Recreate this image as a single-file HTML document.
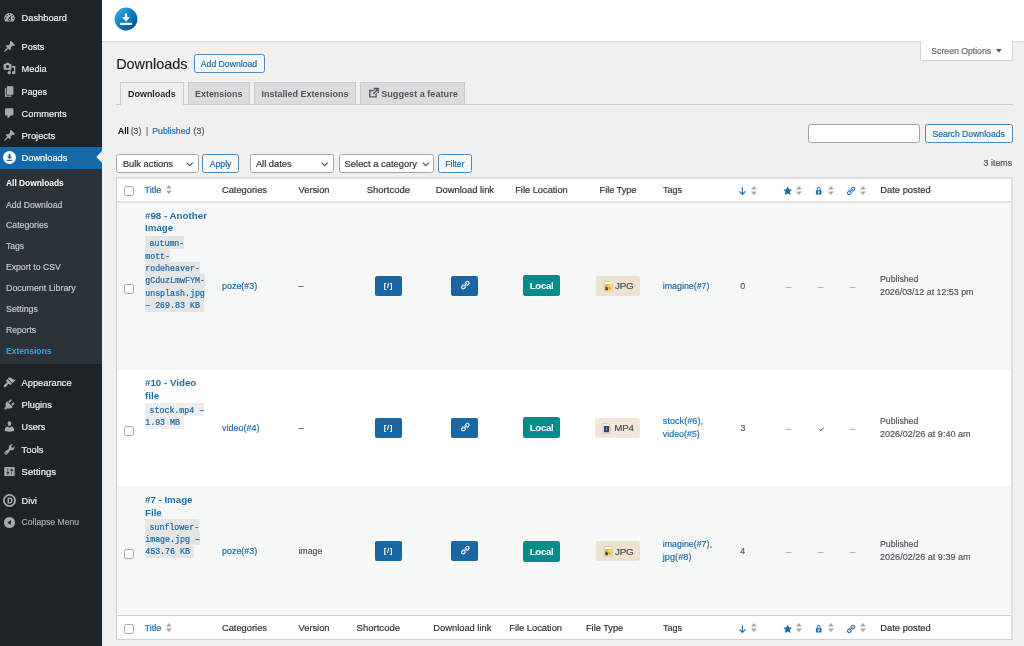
<!DOCTYPE html>
<html lang="en">
<head>
<meta charset="utf-8">
<title>Downloads ‹ WordPress</title>
<style>
html,body{margin:0;padding:0;}
body{width:1024px;height:646px;overflow:hidden;position:relative;background:#f0f0f1;font-family:"Liberation Sans",sans-serif;color:#3c434a;}
span,div,svg{position:absolute;box-sizing:border-box;}
span{white-space:pre;line-height:20px;-webkit-text-stroke:0.18px currentColor;}
svg{overflow:visible;}
.sb{background:#1d2327;}
.sub{background:#2c3338;}
.act{background:#1669a8;}
.hdr{background:#fff;border-bottom:1px solid #dcdcde;}
.btn{background:#f6f7f7;border:1px solid #4d8abd;border-radius:2.5px;}
.sel{background:#fff;border:1px solid #a3a6aa;border-radius:2.5px;}
.tab{background:#dcdcde;border:1px solid #cbccce;border-bottom:none;}
.tab.on{background:#f0f0f1;}
.tbl{background:#fff;border:1px solid #cfd0d3;}
.alt{background:#f6f7f7;}
.cb{background:#fff;border:1px solid #a3a6aa;border-radius:2.5px;}
.bb{background:#1a66a3;border-radius:2px;}
.loc{background:#028d8b;border-radius:2.5px;}
.ft{background:#eee2d1;border-radius:2.5px;}
.cd{background:rgba(0,0,0,.07);}
.m{font-family:"Liberation Mono",monospace;-webkit-text-stroke:0.22px currentColor;}
</style>
</head>
<body>
<div id="wrap" style="left:0;top:0;width:1024px;height:646px;will-change:transform">
<div class="sb" style="left:0;top:0;width:102px;height:646px"></div>
<div class="sub" style="left:0;top:169px;width:102px;height:195.4px"></div>
<div class="act" style="left:0;top:147px;width:102px;height:22px"></div>
<svg width="6" height="12" style="left:96px;top:151.4px"><path d="M6 0L0.300 5.900L6 11.800z" fill="#f0f0f1"/></svg>
<span style="left:21.60px;top:8.00px;font-size:9.28px;color:#f0f0f1;">Dashboard</span>
<svg viewBox="0 0 20 20" width="13" height="13" style="left:3.20px;top:11.20px"><path fill="#a7aaad" fill-rule="evenodd" d="M3.76 16h12.48c1.1-1.37 1.76-3.11 1.76-5 0-4.42-3.58-8-8-8s-8 3.58-8 8c0 1.89.66 3.63 1.76 5zM10 4c.55 0 1 .45 1 1s-.45 1-1 1-1-.45-1-1 .45-1 1-1zM6 6c.55 0 1 .45 1 1s-.45 1-1 1-1-.45-1-1 .45-1 1-1zm8 0c.55 0 1 .45 1 1s-.45 1-1 1-1-.45-1-1 .45-1 1-1zm-5.37 5.55L12 7v6c0 1.1-.9 2-2 2s-2-.9-2-2c0-.57.24-1.08.63-1.45zM4 10c.55 0 1 .45 1 1s-.45 1-1 1-1-.45-1-1 .45-1 1-1zm12 0c.55 0 1 .45 1 1s-.45 1-1 1-1-.45-1-1 .45-1 1-1zm-5 3c0-.55-.45-1-1-1s-1 .45-1 1 .45 1 1 1 1-.45 1-1z"/></svg>
<span style="left:21.60px;top:37.00px;font-size:9.08px;color:#f0f0f1;">Posts</span>
<svg viewBox="0 0 20 20" width="13" height="13" style="left:3.20px;top:39.70px"><path fill="#a7aaad" fill-rule="evenodd" d="M10.44 3.02l1.82-1.82 6.36 6.35-1.83 1.82c-1.05-.68-2.48-.57-3.41.36l-.75.75c-.92.93-1.04 2.35-.35 3.41l-1.83 1.82-2.41-2.41-2.8 2.79c-.42.42-3.38 2.71-3.8 2.29s1.86-3.39 2.28-3.81l2.79-2.79L4.1 9.36l1.83-1.82c1.05.69 2.48.57 3.4-.36l.75-.75c.93-.92 1.05-2.35.36-3.41z"/></svg>
<span style="left:21.60px;top:59.00px;font-size:9.22px;color:#f0f0f1;">Media</span>
<svg viewBox="0 0 20 20" width="13" height="13" style="left:3.20px;top:62.00px"><path fill="#a7aaad" fill-rule="evenodd" d="M13 11V4c0-.55-.45-1-1-1h-1.670L9 1H5L3.670 3H2c-.55 0-1 .45-1 1v7c0 .55.45 1 1 1h10c.55 0 1-.45 1-1zM7 4.5c1.38 0 2.5 1.12 2.5 2.5S8.380 9.500 7 9.500 4.500 8.380 4.500 7 5.620 4.500 7 4.500zM14 6h5v10.500c0 1.380-1.120 2.500-2.500 2.500S14 17.880 14 16.500s1.120-2.500 2.500-2.500c.17 0 .34.020.5.050V9h-3V6zm-4 8.050V13h2v3.500c0 1.380-1.120 2.500-2.500 2.500S7 17.880 7 16.500 8.120 14 9.500 14c.17 0 .34.020.5.050z"/></svg>
<span style="left:21.60px;top:82.00px;font-size:8.92px;color:#f0f0f1;">Pages</span>
<svg viewBox="0 0 20 20" width="13" height="13" style="left:3.20px;top:84.60px"><path fill="#a7aaad" fill-rule="evenodd" d="M6 15V2h10v13H6zm-1 1h8v2H3V5h2v11z"/></svg>
<span style="left:21.60px;top:104.00px;font-size:9.31px;color:#f0f0f1;">Comments</span>
<svg viewBox="0 0 20 20" width="13" height="13" style="left:3.20px;top:106.90px"><path fill="#a7aaad" fill-rule="evenodd" d="M5 2h9c1.1 0 2 .9 2 2v7c0 1.1-.9 2-2 2h-2l-5 5v-5H5c-1.1 0-2-.9-2-2V4c0-1.1.9-2 2-2z"/></svg>
<span style="left:21.60px;top:126.00px;font-size:9.33px;color:#f0f0f1;">Projects</span>
<svg viewBox="0 0 20 20" width="13" height="13" style="left:3.20px;top:128.80px"><path fill="#a7aaad" fill-rule="evenodd" d="M10.44 3.02l1.82-1.82 6.36 6.35-1.83 1.82c-1.05-.68-2.48-.57-3.41.36l-.75.75c-.92.93-1.04 2.35-.35 3.41l-1.83 1.82-2.41-2.41-2.8 2.79c-.42.42-3.38 2.71-3.8 2.29s1.86-3.39 2.28-3.81l2.79-2.79L4.1 9.36l1.83-1.82c1.05.69 2.48.57 3.4-.36l.75-.75c.93-.92 1.05-2.35.36-3.41z"/></svg>
<span style="left:21.60px;top:148.00px;font-size:9.24px;color:#fff;">Downloads</span>
<span style="left:21.60px;top:373.00px;font-size:9.29px;color:#f0f0f1;">Appearance</span>
<svg viewBox="0 0 20 20" width="13" height="13" style="left:3.20px;top:375.70px"><path fill="#a7aaad" fill-rule="evenodd" d="M14.48 11.06L7.41 3.99l1.5-1.5c.5-.56 2.3-.47 3.51.32 1.21.8 1.43 1.28 2.91 2.1 1.18.64 2.45 1.26 4.45.85zm-.71.71L6.7 4.7 4.93 6.47c-.39.39-.39 1.02 0 1.41l1.06 1.06c.39.39.39 1.030 0 1.420-.6.6-1.430 1.110-2.210 1.690-.35.26-.7.53-1.010.84C1.430 14.230.4 16.080 1.4 17.070c.99 1 2.840-.03 4.180-1.360.31-.31.58-.66.85-1.020.57-.78 1.080-1.610 1.690-2.210.39-.39 1.020-.39 1.410 0l1.060 1.060c.39.39 1.020.39 1.410 0z"/></svg>
<span style="left:21.60px;top:395.00px;font-size:9.21px;color:#f0f0f1;">Plugins</span>
<svg viewBox="0 0 20 20" width="13" height="13" style="left:3.20px;top:397.80px"><path fill="#a7aaad" fill-rule="evenodd" d="M13.11 4.36L9.87 7.6 8 5.73l3.240-3.240c.35-.34 1.050-.2 1.560.32.52.51.66 1.210.31 1.550zm-8 1.770l.91-1.120 9.010 9.010-1.190.84c-.71.71-2.630 1.160-3.820 1.160H6.140L4.9 17.260c-.59.59-1.540.59-2.120 0-.59-.58-.59-1.530 0-2.120l1.240-1.240v-3.880c0-1.130.4-3.190 1.090-3.890zm7.260 3.970l3.240-3.240c.34-.35 1.040-.21 1.550.31.52.51.66 1.210.31 1.550l-3.240 3.250z"/></svg>
<span style="left:21.60px;top:417.00px;font-size:9.11px;color:#f0f0f1;">Users</span>
<svg viewBox="0 0 20 20" width="13" height="13" style="left:3.20px;top:419.90px"><path fill="#a7aaad" fill-rule="evenodd" d="M10 9.25c-2.27 0-2.73-3.44-2.73-3.440C7 4.020 7.820 2 9.970 2c2.160 0 2.980 2.020 2.710 3.810 0 0-.41 3.440-2.680 3.440zm0 2.570L12.720 10c2.390 0 4.520 2.330 4.520 4.530v2.490s-3.650 1.130-7.240 1.130c-3.650 0-7.240-1.130-7.240-1.130v-2.490c0-2.250 1.940-4.480 4.470-4.480z"/></svg>
<span style="left:21.60px;top:440.00px;font-size:9.34px;color:#f0f0f1;">Tools</span>
<svg viewBox="0 0 20 20" width="13" height="13" style="left:3.20px;top:443.00px"><path fill="#a7aaad" fill-rule="evenodd" d="M16.68 9.77c-1.34 1.34-3.3 1.67-4.95.99l-5.41 6.520c-.99.99-2.590.99-3.580 0s-.99-2.590 0-3.570l6.520-5.420c-.68-1.650-.35-3.610.99-4.950 1.280-1.280 3.120-1.620 4.720-1.060l-2.890 2.890 2.820 2.820 2.860-2.870c.53 1.580.18 3.390-1.080 4.650zM3.810 16.210c.4.39 1.040.39 1.430 0 .4-.4.4-1.040 0-1.430-.39-.4-1.030-.4-1.430 0-.39.39-.39 1.030 0 1.430z"/></svg>
<span style="left:21.60px;top:462.00px;font-size:9.52px;color:#f0f0f1;">Settings</span>
<svg viewBox="0 0 20 20" width="13" height="13" style="left:3.20px;top:465.00px"><path fill="#a7aaad" fill-rule="evenodd" d="M18 16V4c0-.55-.45-1-1-1H3c-.55 0-1 .45-1 1v12c0 .55.45 1 1 1h14c.55 0 1-.45 1-1zM8 11h1c.55 0 1 .45 1 1s-.45 1-1 1H8v1.500c0 .28-.22.5-.5.5s-.5-.22-.5-.5V13H6c-.55 0-1-.45-1-1s.45-1 1-1h1V5.500c0-.28.22-.5.5-.5s.5.22.5.5V11zm5-2h-1c-.55 0-1-.45-1-1s.45-1 1-1h1V5.500c0-.28.22-.5.5-.5s.5.22.5.5V7h1c.55 0 1 .45 1 1s-.45 1-1 1h-1v5.500c0 .28-.22.5-.5.5s-.5-.22-.5-.5V9z"/></svg>
<span style="left:21.60px;top:491.00px;font-size:9.18px;color:#f0f0f1;">Divi</span>
<span style="left:21.60px;top:512.00px;font-size:8.65px;color:#a7aaad;">Collapse Menu</span>
<span style="left:6.00px;top:173.00px;font-size:8.39px;color:#fff;font-weight:700;-webkit-text-stroke:0;">All Downloads</span>
<span style="left:6.00px;top:195.00px;font-size:8.66px;color:#c3c7cb;">Add Download</span>
<span style="left:6.00px;top:215.00px;font-size:8.73px;color:#c3c7cb;">Categories</span>
<span style="left:6.00px;top:236.00px;font-size:8.57px;color:#c3c7cb;">Tags</span>
<span style="left:6.00px;top:257.00px;font-size:8.63px;color:#c3c7cb;">Export to CSV</span>
<span style="left:6.00px;top:278.00px;font-size:8.84px;color:#c3c7cb;">Document Library</span>
<span style="left:6.00px;top:299.00px;font-size:8.86px;color:#c3c7cb;">Settings</span>
<span style="left:6.00px;top:320.00px;font-size:8.62px;color:#c3c7cb;">Reports</span>
<span style="left:6.00px;top:341.00px;font-size:8.53px;color:#39a0dc;font-weight:700;-webkit-text-stroke:0;">Extensions</span>
<svg viewBox="0 0 20 20" width="13" height="13" style="left:3.300px;top:151px"><circle cx="10" cy="10" r="10" fill="#fff"/><path d="M8.6 4.6h2.8v4h2.6L10 12.6 6 8.600h2.6zM5.600 13.600h8.800v1.800H5.600z" fill="#1f6cab"/></svg>
<svg viewBox="0 0 20 20" width="13" height="13" style="left:3.300px;top:494.100px"><circle cx="10" cy="10" r="8.600" fill="none" stroke="#a7aaad" stroke-width="2.800"/><path d="M7 5.500h3.200a4.500 4.500 0 0 1 0 9H7zM9.200 7.500v5h1a2.500 2.500 0 0 0 0-5z" fill="#a7aaad" fill-rule="evenodd"/></svg>
<svg viewBox="0 0 20 20" width="11" height="11" style="left:4.300px;top:517.300px"><circle cx="10" cy="10" r="10" fill="#a7aaad"/><path d="M12.500 5.500v9L6 10z" fill="#1d2327"/></svg>
<div class="hdr" style="left:102px;top:0;width:922px;height:41.6px"></div>
<svg viewBox="0 0 24 24" width="24" height="24" style="left:114px;top:7.100px"><defs><linearGradient id="lg" x1="0.100" y1="0.100" x2="0.900" y2="0.900"><stop offset="0" stop-color="#44a8d2"/><stop offset="0.500" stop-color="#0b7dc5"/><stop offset="1" stop-color="#03508f"/></linearGradient></defs><circle cx="12" cy="12" r="11.400" fill="url(#lg)"/><path d="M10.900 6.400h2.200v3.700h2.900L12 14.700 8 10.100h2.900zM6.200 15.700h11.700v2.300H6.200z" fill="#fff"/></svg>
<div style="left:920px;top:41px;width:92.500px;height:19.600px;background:#fff;border:1px solid #d2d3d5;border-top:none;border-radius:0 0 2.500px 2.500px"></div>
<span style="left:931.30px;top:41.00px;font-size:8.68px;color:#646970;">Screen Options</span>
<svg width="6" height="4" style="left:995.8px;top:49px"><path d="M0 0h5.600L2.800 3.800z" fill="#50575e"/></svg>
<span style="left:116.20px;top:54.00px;font-size:14.41px;color:#1d2327;">Downloads</span>
<div class="btn" style="left:194.00px;top:53.70px;width:70.60px;height:19.50px;"></div>
<span style="left:200.80px;top:54.00px;font-size:8.67px;color:#1f6cab;">Add Download</span>
<div style="left:116.00px;top:104.00px;width:896.50px;height:1.00px;background:#cbccce"></div>
<div class="tab on" style="left:120.00px;top:81.60px;width:63.60px;height:23.40px;"></div>
<div class="tab" style="left:188.30px;top:81.60px;width:61.70px;height:22.40px;"></div>
<div class="tab" style="left:254.00px;top:81.60px;width:102.00px;height:22.40px;"></div>
<div class="tab" style="left:360.40px;top:81.60px;width:104.80px;height:22.40px;"></div>
<span style="left:128.00px;top:84.00px;font-size:8.96px;color:#1d2327;font-weight:700;-webkit-text-stroke:0;">Downloads</span>
<span style="left:195.10px;top:84.00px;font-size:8.87px;color:#50575e;font-weight:700;-webkit-text-stroke:0;">Extensions</span>
<span style="left:261.60px;top:84.00px;font-size:9.01px;color:#50575e;font-weight:700;-webkit-text-stroke:0;">Installed Extensions</span>
<span style="left:381.20px;top:84.00px;font-size:9.14px;color:#50575e;font-weight:700;-webkit-text-stroke:0;">Suggest a feature</span>
<svg viewBox="0 0 20 20" width="14" height="14" style="left:367.300px;top:85.900px"><path fill="#50575e" d="M9 3h8v8l-2-1V6.920l-5.600 5.590-1.410-1.410L13.580 5.500H10L9 3zm3 12V11.900l2-2V17H3V6h8l-2 2H5v7h7z" transform="translate(0,-0.500)"/></svg>
<span style="left:118.00px;top:121.00px;font-size:8.50px;color:#000;font-weight:700;-webkit-text-stroke:0;">All</span>
<span style="left:130.70px;top:121.00px;font-size:8.80px;color:#50575e;">(3)</span>
<span style="left:146.00px;top:121.00px;font-size:8.60px;color:#646970;">|</span>
<span style="left:152.30px;top:121.00px;font-size:8.67px;color:#1f6cab;">Published</span>
<span style="left:193.60px;top:121.00px;font-size:8.80px;color:#50575e;">(3)</span>
<div class="sel" style="left:808.10px;top:124.20px;width:111.50px;height:19.20px;"></div>
<div class="btn" style="left:925.10px;top:124.20px;width:87.50px;height:19.20px;"></div>
<span style="left:932.40px;top:124.00px;font-size:8.65px;color:#1f6cab;">Search Downloads</span>
<div class="sel" style="left:116.00px;top:153.50px;width:82.50px;height:19.50px;"></div>
<span style="left:122.90px;top:154.00px;font-size:9.31px;color:#2c3338;">Bulk actions</span>
<svg width="8" height="5" style="left:185.6px;top:161.9px"><path d="M0.700 0.700L3.700 3.700L6.700 0.700" fill="none" stroke="#50575e" stroke-width="1.200"/></svg>
<div class="btn" style="left:202.00px;top:153.70px;width:36.90px;height:19.30px;"></div>
<span style="left:209.70px;top:154.00px;font-size:8.71px;color:#1f6cab;">Apply</span>
<div class="sel" style="left:250.30px;top:153.70px;width:84.00px;height:19.30px;"></div>
<span style="left:255.90px;top:154.00px;font-size:9.33px;color:#2c3338;">All dates</span>
<svg width="8" height="5" style="left:321.2px;top:161.9px"><path d="M0.700 0.700L3.700 3.700L6.700 0.700" fill="none" stroke="#50575e" stroke-width="1.200"/></svg>
<div class="sel" style="left:339.00px;top:153.70px;width:95.00px;height:19.30px;"></div>
<span style="left:344.60px;top:154.00px;font-size:9.40px;color:#2c3338;">Select a category</span>
<svg width="8" height="5" style="left:422px;top:161.9px"><path d="M0.700 0.700L3.700 3.700L6.700 0.700" fill="none" stroke="#50575e" stroke-width="1.200"/></svg>
<div class="btn" style="left:438.00px;top:153.70px;width:33.80px;height:19.30px;"></div>
<span style="left:445.20px;top:154.00px;font-size:8.68px;color:#1f6cab;">Filter</span>
<span style="left:983.60px;top:153.00px;font-size:8.90px;color:#50575e;">3 items</span>
<div style="left:116.00px;top:177.00px;width:897.00px;height:463.00px;background:#fff"></div>
<div class="alt" style="left:117.00px;top:202.00px;width:894.00px;height:168.00px;"></div>
<div class="alt" style="left:117.00px;top:486.00px;width:894.00px;height:129.00px;"></div>
<div style="left:116.00px;top:177.00px;width:897.00px;height:2.00px;background:#e0e1e4"></div>
<div style="left:1011.00px;top:177.00px;width:2.00px;height:463.00px;background:#e0e1e4"></div>
<div style="left:116.00px;top:177.00px;width:1.00px;height:463.00px;background:#cfd0d3"></div>
<div style="left:116.00px;top:639.00px;width:897.00px;height:1.00px;background:#cfd0d3"></div>
<div style="left:117.00px;top:201.00px;width:894.00px;height:2.00px;background:#e2e3e5"></div>
<div style="left:117.00px;top:615.00px;width:894.00px;height:1.00px;background:#d0d1d4"></div>
<div class="cb" style="left:124.00px;top:185.60px;width:10.00px;height:10.00px;"></div>
<div class="cb" style="left:124.00px;top:283.70px;width:10.00px;height:10.00px;"></div>
<div class="cb" style="left:124.00px;top:425.80px;width:10.00px;height:10.00px;"></div>
<div class="cb" style="left:124.00px;top:549.00px;width:10.00px;height:10.00px;"></div>
<div class="cb" style="left:124.00px;top:623.50px;width:10.00px;height:10.00px;"></div>
<span style="left:144.40px;top:180.00px;font-size:9.23px;color:#1f6cab;">Title</span>
<svg width="6" height="10" style="left:166px;top:184.90px"><path d="M0 3.600L2.900 0L5.800 3.600z" fill="#a7aaad"/><path d="M0 5.600L2.900 9.200L5.800 5.600z" fill="#a7aaad"/></svg>
<span style="left:221.90px;top:180.00px;font-size:9.33px;color:#2c3338;">Categories</span>
<span style="left:298.60px;top:180.00px;font-size:9.26px;color:#2c3338;">Version</span>
<span style="left:366.70px;top:180.00px;font-size:9.50px;color:#2c3338;">Shortcode</span>
<span style="left:435.70px;top:180.00px;font-size:9.38px;color:#2c3338;">Download link</span>
<span style="left:515.20px;top:180.00px;font-size:9.28px;color:#2c3338;">File Location</span>
<span style="left:599.60px;top:180.00px;font-size:9.11px;color:#2c3338;">File Type</span>
<span style="left:663.00px;top:180.00px;font-size:8.99px;color:#2c3338;">Tags</span>
<svg width="8" height="9" style="left:738.6px;top:187.00px"><path d="M3.400 0.200v7.200M0.500 4.400L3.400 7.400L6.300 4.400" fill="none" stroke="#1f6cab" stroke-width="1.150"/></svg>
<svg width="6" height="10" style="left:750.6px;top:185.90px"><path d="M0 3.600L2.900 0L5.800 3.600z" fill="#a7aaad"/><path d="M0 5.600L2.900 9.200L5.800 5.600z" fill="#a7aaad"/></svg>
<svg viewBox="0 0 20 20" width="9.400" height="9.400" style="left:782.700px;top:186.40px"><path d="M10 1l3 6 6 .75-4.120 4.620L16 19l-6-3-6 3 1.130-6.630L1 7.750 7 7z" fill="#1f6cab"/></svg>
<svg width="6" height="10" style="left:796px;top:185.90px"><path d="M0 3.600L2.900 0L5.800 3.600z" fill="#a7aaad"/><path d="M0 5.600L2.900 9.200L5.800 5.600z" fill="#a7aaad"/></svg>
<svg viewBox="0 0 20 20" width="9.400" height="9.400" style="left:814.400px;top:186.30px"><path fill-rule="evenodd" d="M15 9h-1V6c0-2.200-1.800-4-4-4S6 3.800 6 6v3H5c-.55 0-1 .45-1 1v7c0 .55.45 1 1 1h10c.55 0 1-.45 1-1v-7c0-.55-.45-1-1-1zm-4 5.720V16H9v-1.280c-.6-.35-1-.98-1-1.720 0-1.100.9-2 2-2s2 .9 2 2c0 .74-.4 1.380-1 1.720zM12 9H8V6c0-1.100.9-2 2-2s2 .9 2 2v3z" fill="#1f6cab"/></svg>
<svg width="6" height="10" style="left:827.8px;top:185.90px"><path d="M0 3.600L2.900 0L5.800 3.600z" fill="#a7aaad"/><path d="M0 5.600L2.900 9.200L5.800 5.600z" fill="#a7aaad"/></svg>
<svg viewBox="0 0 20 20" width="9.800" height="9.800" style="left:846.100px;top:186.10px"><path d="M17.740 2.760c1.680 1.690 1.680 4.410 0 6.100l-1.530 1.520c-1.120 1.120-2.700 1.470-4.140 1.090l2.620-2.610.76-.77.760-.76c.84-.84.840-2.200 0-3.040-.84-.85-2.200-.85-3.040 0l-.77.760-3.380 3.380c-.37-1.440-.02-3.020 1.100-4.140l1.520-1.530c1.690-1.680 4.420-1.680 6.100 0zM8.590 13.430l5.340-5.340c.42-.42.42-1.100 0-1.520-.44-.43-1.130-.39-1.530 0l-5.330 5.340c-.42.420-.42 1.100 0 1.520.44.430 1.130.390 1.520 0zm-.76 2.290l4.140-4.150c.38 1.440.03 3.020-1.090 4.140l-1.520 1.530c-1.690 1.680-4.410 1.680-6.100 0-1.680-1.680-1.680-4.420 0-6.100l1.530-1.520c1.120-1.120 2.700-1.470 4.140-1.100l-4.140 4.150c-.85.840-.85 2.200 0 3.050.84.840 2.200.840 3.040 0z" fill="#1f6cab"/></svg>
<svg width="6" height="10" style="left:859.7px;top:185.90px"><path d="M0 3.600L2.900 0L5.800 3.600z" fill="#a7aaad"/><path d="M0 5.600L2.900 9.200L5.800 5.600z" fill="#a7aaad"/></svg>
<span style="left:880.30px;top:180.00px;font-size:9.35px;color:#2c3338;">Date posted</span>
<span style="left:144.40px;top:618.00px;font-size:9.23px;color:#1f6cab;">Title</span>
<svg width="6" height="10" style="left:166px;top:623.40px"><path d="M0 3.600L2.900 0L5.800 3.600z" fill="#a7aaad"/><path d="M0 5.600L2.900 9.200L5.800 5.600z" fill="#a7aaad"/></svg>
<span style="left:221.90px;top:618.00px;font-size:9.33px;color:#2c3338;">Categories</span>
<span style="left:298.60px;top:618.00px;font-size:9.26px;color:#2c3338;">Version</span>
<span style="left:356.60px;top:618.00px;font-size:9.54px;color:#2c3338;">Shortcode</span>
<span style="left:433.30px;top:618.00px;font-size:9.33px;color:#2c3338;">Download link</span>
<span style="left:509.30px;top:618.00px;font-size:9.31px;color:#2c3338;">File Location</span>
<span style="left:586.00px;top:618.00px;font-size:9.21px;color:#2c3338;">File Type</span>
<span style="left:663.00px;top:618.00px;font-size:8.99px;color:#2c3338;">Tags</span>
<svg width="8" height="9" style="left:738.6px;top:624.50px"><path d="M3.400 0.200v7.200M0.500 4.400L3.400 7.400L6.300 4.400" fill="none" stroke="#1f6cab" stroke-width="1.150"/></svg>
<svg width="6" height="10" style="left:750.6px;top:623.40px"><path d="M0 3.600L2.900 0L5.800 3.600z" fill="#a7aaad"/><path d="M0 5.600L2.900 9.200L5.800 5.600z" fill="#a7aaad"/></svg>
<svg viewBox="0 0 20 20" width="9.400" height="9.400" style="left:782.700px;top:623.90px"><path d="M10 1l3 6 6 .75-4.120 4.620L16 19l-6-3-6 3 1.130-6.630L1 7.750 7 7z" fill="#1f6cab"/></svg>
<svg width="6" height="10" style="left:796px;top:623.40px"><path d="M0 3.600L2.900 0L5.800 3.600z" fill="#a7aaad"/><path d="M0 5.600L2.900 9.200L5.800 5.600z" fill="#a7aaad"/></svg>
<svg viewBox="0 0 20 20" width="9.400" height="9.400" style="left:814.400px;top:623.80px"><path fill-rule="evenodd" d="M15 9h-1V6c0-2.200-1.800-4-4-4S6 3.800 6 6v3H5c-.55 0-1 .45-1 1v7c0 .55.45 1 1 1h10c.55 0 1-.45 1-1v-7c0-.55-.45-1-1-1zm-4 5.720V16H9v-1.280c-.6-.35-1-.98-1-1.720 0-1.100.9-2 2-2s2 .9 2 2c0 .74-.4 1.380-1 1.720zM12 9H8V6c0-1.100.9-2 2-2s2 .9 2 2v3z" fill="#1f6cab"/></svg>
<svg width="6" height="10" style="left:827.8px;top:623.40px"><path d="M0 3.600L2.900 0L5.800 3.600z" fill="#a7aaad"/><path d="M0 5.600L2.900 9.200L5.800 5.600z" fill="#a7aaad"/></svg>
<svg viewBox="0 0 20 20" width="9.800" height="9.800" style="left:846.100px;top:623.60px"><path d="M17.740 2.760c1.680 1.690 1.680 4.410 0 6.100l-1.530 1.520c-1.120 1.120-2.700 1.470-4.140 1.090l2.620-2.610.76-.77.760-.76c.84-.84.840-2.200 0-3.040-.84-.85-2.200-.85-3.040 0l-.77.760-3.380 3.380c-.37-1.440-.02-3.020 1.100-4.140l1.520-1.530c1.690-1.680 4.420-1.680 6.100 0zM8.590 13.430l5.340-5.340c.42-.42.42-1.100 0-1.520-.44-.43-1.130-.39-1.530 0l-5.330 5.340c-.42.420-.42 1.100 0 1.520.44.430 1.130.390 1.520 0zm-.76 2.290l4.140-4.150c.38 1.440.03 3.020-1.090 4.140l-1.520 1.530c-1.690 1.680-4.410 1.680-6.100 0-1.680-1.680-1.680-4.420 0-6.100l1.530-1.520c1.120-1.120 2.700-1.470 4.140-1.100l-4.140 4.150c-.85.840-.85 2.200 0 3.050.84.840 2.200.840 3.040 0z" fill="#1f6cab"/></svg>
<svg width="6" height="10" style="left:859.7px;top:623.40px"><path d="M0 3.600L2.900 0L5.800 3.600z" fill="#a7aaad"/><path d="M0 5.600L2.900 9.200L5.800 5.600z" fill="#a7aaad"/></svg>
<span style="left:880.30px;top:618.00px;font-size:9.35px;color:#2c3338;">Date posted</span>
<span style="left:145.00px;top:206.00px;font-size:9.76px;color:#1f6cab;font-weight:700;-webkit-text-stroke:0;">#98 - Another</span>
<span style="left:145.00px;top:218.00px;font-size:9.75px;color:#1f6cab;font-weight:700;-webkit-text-stroke:0;">Image</span>
<div class="cd" style="left:145.20px;top:236.00px;width:39.12px;height:13.00px;"></div>
<span class="m" style="left:149.50px;top:234.00px;font-size:8.29px;color:#1f6cab;">autumn-</span>
<div class="cd" style="left:145.20px;top:249.00px;width:24.87px;height:13.00px;"></div>
<span class="m" style="left:145.20px;top:247.00px;font-size:8.29px;color:#1f6cab;">mott-</span>
<div class="cd" style="left:145.20px;top:262.00px;width:54.71px;height:12.00px;"></div>
<span class="m" style="left:145.20px;top:259.00px;font-size:8.29px;color:#1f6cab;">rodeheaver-</span>
<div class="cd" style="left:145.20px;top:274.00px;width:59.69px;height:13.00px;"></div>
<span class="m" style="left:145.20px;top:271.00px;font-size:8.29px;color:#1f6cab;">gCduzLmwFYM-</span>
<div class="cd" style="left:145.20px;top:287.00px;width:59.69px;height:12.00px;"></div>
<span class="m" style="left:145.20px;top:284.00px;font-size:8.29px;color:#1f6cab;">unsplash.jpg</span>
<div class="cd" style="left:145.20px;top:299.00px;width:58.91px;height:13.00px;"></div>
<span class="m" style="left:145.20px;top:296.00px;font-size:8.29px;color:#1f6cab;">– 269.83 KB</span>
<span style="left:221.90px;top:276.00px;font-size:8.99px;color:#1f6cab;">poze(#3)</span>
<span style="left:298.60px;top:276.00px;font-size:8.80px;color:#50575e;">–</span>
<div class="bb" style="left:374.80px;top:276.00px;width:27.20px;height:20.00px;"></div>
<span style="left:383.70px;top:276.00px;font-size:7.80px;color:#fff;font-weight:700;-webkit-text-stroke:0;letter-spacing:0.700px;">[/]</span>
<div class="bb" style="left:451.00px;top:276.00px;width:27.40px;height:20.00px;"></div>
<svg viewBox="0 0 20 20" width="10.200" height="10.200" style="left:460px;top:280.10px"><path d="M17.740 2.760c1.680 1.690 1.680 4.410 0 6.100l-1.530 1.520c-1.120 1.120-2.700 1.470-4.140 1.090l2.620-2.610.76-.77.760-.76c.84-.84.840-2.200 0-3.040-.84-.85-2.200-.85-3.040 0l-.77.760-3.380 3.380c-.37-1.440-.02-3.020 1.100-4.140l1.520-1.530c1.690-1.680 4.420-1.680 6.100 0zM8.590 13.430l5.340-5.340c.42-.42.42-1.100 0-1.520-.44-.43-1.130-.39-1.530 0l-5.330 5.340c-.42.420-.42 1.100 0 1.520.44.430 1.130.390 1.520 0zm-.76 2.290l4.140-4.150c.38 1.440.03 3.020-1.090 4.140l-1.520 1.530c-1.690 1.680-4.410 1.680-6.100 0-1.680-1.680-1.680-4.420 0-6.100l1.530-1.520c1.120-1.120 2.700-1.470 4.140-1.100l-4.140 4.150c-.85.840-.85 2.200 0 3.050.84.840 2.200.840 3.040 0z" fill="#fff"/></svg>
<div class="loc" style="left:523.00px;top:275.40px;width:37.20px;height:21.00px;"></div>
<span style="left:529.70px;top:276.00px;font-size:9.70px;color:#fff;font-weight:700;-webkit-text-stroke:0;letter-spacing:-0.300px;">Local</span>
<div class="ft" style="left:596.20px;top:275.70px;width:43.70px;height:20.60px;"></div>
<span style="left:615.00px;top:276.00px;font-size:9.90px;color:#46505a;letter-spacing:-0.250px;">JPG</span>
<svg width="9" height="11" style="left:603.5px;top:280.70px"><path d="M0.400 0.400h5.800l2.200 2.200v7.600h-8z" fill="#fdfdfd" stroke="#b9c6cc" stroke-width="0.800"/><rect x="1.300" y="3" width="6.200" height="6.300" fill="#e9b52c"/><path d="M1.300 5.600l2.600 1.200v2.500h-2.600z" fill="#6b3d14"/><rect x="4.200" y="3.600" width="2.600" height="2.400" fill="#f6d968"/></svg>
<span style="left:662.80px;top:276.00px;font-size:8.84px;color:#1f6cab;">imagine(#7)</span>
<span style="left:740.20px;top:276.00px;font-size:8.80px;color:#50575e;">0</span>
<span style="left:786.00px;top:277.00px;font-size:9.53px;color:#a7aaad;">–</span>
<span style="left:818.00px;top:277.00px;font-size:9.53px;color:#a7aaad;">–</span>
<span style="left:850.00px;top:277.00px;font-size:9.53px;color:#a7aaad;">–</span>
<span style="left:880.00px;top:269.00px;font-size:8.72px;color:#50575e;">Published</span>
<span style="left:880.00px;top:282.00px;font-size:8.86px;color:#50575e;">2026/03/12 at 12:53 pm</span>
<span style="left:145.00px;top:373.00px;font-size:9.75px;color:#1f6cab;font-weight:700;-webkit-text-stroke:0;">#10 - Video</span>
<span style="left:145.00px;top:386.00px;font-size:9.75px;color:#1f6cab;font-weight:700;-webkit-text-stroke:0;">file</span>
<div class="cd" style="left:145.20px;top:403.00px;width:59.01px;height:13.00px;"></div>
<span class="m" style="left:149.50px;top:401.00px;font-size:8.29px;color:#1f6cab;">stock.mp4 –</span>
<div class="cd" style="left:145.20px;top:416.00px;width:39.02px;height:13.00px;"></div>
<span class="m" style="left:145.20px;top:413.00px;font-size:8.29px;color:#1f6cab;">1.93 MB</span>
<span style="left:221.90px;top:418.00px;font-size:9.02px;color:#1f6cab;">video(#4)</span>
<span style="left:298.60px;top:418.00px;font-size:8.80px;color:#50575e;">–</span>
<div class="bb" style="left:374.80px;top:418.00px;width:27.20px;height:20.00px;"></div>
<span style="left:383.70px;top:418.00px;font-size:7.80px;color:#fff;font-weight:700;-webkit-text-stroke:0;letter-spacing:0.700px;">[/]</span>
<div class="bb" style="left:451.00px;top:418.00px;width:27.40px;height:20.00px;"></div>
<svg viewBox="0 0 20 20" width="10.200" height="10.200" style="left:460px;top:422.10px"><path d="M17.740 2.760c1.680 1.690 1.680 4.410 0 6.100l-1.530 1.520c-1.120 1.120-2.700 1.470-4.140 1.090l2.620-2.610.76-.77.760-.76c.84-.84.840-2.200 0-3.040-.84-.85-2.200-.85-3.040 0l-.77.760-3.380 3.380c-.37-1.440-.02-3.020 1.100-4.140l1.520-1.530c1.690-1.680 4.420-1.680 6.100 0zM8.590 13.430l5.340-5.340c.42-.42.42-1.100 0-1.520-.44-.43-1.130-.39-1.530 0l-5.330 5.340c-.42.420-.42 1.100 0 1.520.44.430 1.130.390 1.520 0zm-.76 2.290l4.140-4.150c.38 1.440.03 3.020-1.090 4.140l-1.520 1.530c-1.690 1.680-4.410 1.680-6.100 0-1.680-1.680-1.680-4.420 0-6.100l1.530-1.520c1.120-1.120 2.700-1.470 4.140-1.100l-4.140 4.150c-.85.840-.85 2.200 0 3.050.84.840 2.200.840 3.040 0z" fill="#fff"/></svg>
<div class="loc" style="left:523.00px;top:417.40px;width:37.20px;height:21.00px;"></div>
<span style="left:529.70px;top:418.00px;font-size:9.70px;color:#fff;font-weight:700;-webkit-text-stroke:0;letter-spacing:-0.300px;">Local</span>
<div class="ft" style="left:595.00px;top:417.70px;width:45.10px;height:20.60px;background:#f3e8d8;"></div>
<span style="left:614.30px;top:418.00px;font-size:9.90px;color:#46505a;letter-spacing:-0.250px;">MP4</span>
<svg width="9" height="11" style="left:602px;top:422.70px"><path d="M0.400 0.400h5.800l2.200 2.200v7.600h-8z" fill="#eef3f3" stroke="#b9c6cc" stroke-width="0.800"/><rect x="1.900" y="3" width="5.300" height="6.200" rx="0.600" fill="#3b3e46"/><rect x="4" y="4" width="1.100" height="4.200" fill="#5f86e0"/></svg>
<span style="left:662.80px;top:411.00px;font-size:9.17px;color:#1f6cab;">stock(#6)</span>
<span style="left:700.70px;top:411.00px;font-size:8.70px;color:#50575e;">,</span>
<span style="left:662.80px;top:424.00px;font-size:8.90px;color:#1f6cab;">video(#5)</span>
<span style="left:740.40px;top:418.00px;font-size:8.80px;color:#50575e;">3</span>
<span style="left:786.00px;top:419.00px;font-size:9.53px;color:#a7aaad;">–</span>
<span style="left:850.00px;top:419.00px;font-size:9.53px;color:#a7aaad;">–</span>
<svg width="6" height="5" style="left:818.500px;top:426.500px"><path d="M0.400 2.300L1.800 3.800L4.600 0.500" fill="none" stroke="#3c434a" stroke-width="1"/></svg>
<span style="left:880.00px;top:411.00px;font-size:8.72px;color:#50575e;">Published</span>
<span style="left:880.00px;top:424.00px;font-size:9.06px;color:#50575e;">2026/02/26 at 9:40 am</span>
<span style="left:145.00px;top:490.00px;font-size:9.71px;color:#1f6cab;font-weight:700;-webkit-text-stroke:0;">#7 - Image</span>
<span style="left:145.00px;top:503.00px;font-size:9.75px;color:#1f6cab;font-weight:700;-webkit-text-stroke:0;">File</span>
<div class="cd" style="left:145.20px;top:519.00px;width:54.04px;height:14.00px;"></div>
<span class="m" style="left:149.50px;top:518.00px;font-size:8.29px;color:#1f6cab;">sunflower-</span>
<div class="cd" style="left:145.20px;top:533.00px;width:54.71px;height:12.00px;"></div>
<span class="m" style="left:145.20px;top:530.00px;font-size:8.29px;color:#1f6cab;">image.jpg –</span>
<div class="cd" style="left:145.20px;top:545.00px;width:48.97px;height:13.00px;"></div>
<span class="m" style="left:145.20px;top:542.00px;font-size:8.29px;color:#1f6cab;">453.76 KB</span>
<span style="left:221.90px;top:541.00px;font-size:8.99px;color:#1f6cab;">poze(#3)</span>
<span style="left:298.40px;top:541.00px;font-size:8.80px;color:#50575e;">image</span>
<div class="bb" style="left:374.80px;top:541.20px;width:27.20px;height:20.00px;"></div>
<span style="left:383.70px;top:541.00px;font-size:7.80px;color:#fff;font-weight:700;-webkit-text-stroke:0;letter-spacing:0.700px;">[/]</span>
<div class="bb" style="left:451.00px;top:541.20px;width:27.40px;height:20.00px;"></div>
<svg viewBox="0 0 20 20" width="10.200" height="10.200" style="left:460px;top:545.30px"><path d="M17.740 2.760c1.680 1.690 1.680 4.410 0 6.100l-1.530 1.520c-1.120 1.120-2.700 1.470-4.140 1.090l2.620-2.610.76-.77.760-.76c.84-.84.840-2.200 0-3.040-.84-.85-2.200-.85-3.040 0l-.77.760-3.380 3.380c-.37-1.440-.02-3.020 1.100-4.140l1.520-1.530c1.690-1.680 4.420-1.680 6.100 0zM8.590 13.430l5.340-5.340c.42-.42.42-1.100 0-1.520-.44-.43-1.130-.39-1.530 0l-5.330 5.340c-.42.420-.42 1.100 0 1.520.44.430 1.130.390 1.520 0zm-.76 2.290l4.140-4.150c.38 1.440.03 3.020-1.090 4.140l-1.520 1.530c-1.690 1.680-4.410 1.680-6.100 0-1.680-1.680-1.680-4.420 0-6.100l1.530-1.520c1.120-1.120 2.700-1.470 4.140-1.100l-4.140 4.150c-.85.840-.85 2.200 0 3.050.84.840 2.200.840 3.040 0z" fill="#fff"/></svg>
<div class="loc" style="left:523.00px;top:540.60px;width:37.20px;height:21.00px;"></div>
<span style="left:529.70px;top:542.00px;font-size:9.70px;color:#fff;font-weight:700;-webkit-text-stroke:0;letter-spacing:-0.300px;">Local</span>
<div class="ft" style="left:596.20px;top:540.90px;width:43.70px;height:20.60px;"></div>
<span style="left:615.00px;top:542.00px;font-size:9.90px;color:#46505a;letter-spacing:-0.250px;">JPG</span>
<svg width="9" height="11" style="left:603.5px;top:545.90px"><path d="M0.400 0.400h5.800l2.200 2.200v7.600h-8z" fill="#fdfdfd" stroke="#b9c6cc" stroke-width="0.800"/><rect x="1.300" y="3" width="6.200" height="6.300" fill="#e9b52c"/><path d="M1.300 5.600l2.600 1.200v2.500h-2.600z" fill="#6b3d14"/><rect x="4.200" y="3.600" width="2.600" height="2.400" fill="#f6d968"/></svg>
<span style="left:662.80px;top:534.00px;font-size:8.84px;color:#1f6cab;">imagine(#7)</span>
<span style="left:709.70px;top:534.00px;font-size:8.70px;color:#50575e;">,</span>
<span style="left:662.80px;top:547.00px;font-size:9.22px;color:#1f6cab;">jpg(#8)</span>
<span style="left:740.20px;top:541.00px;font-size:8.80px;color:#50575e;">4</span>
<span style="left:786.00px;top:542.00px;font-size:9.53px;color:#a7aaad;">–</span>
<span style="left:818.00px;top:542.00px;font-size:9.53px;color:#a7aaad;">–</span>
<span style="left:850.00px;top:542.00px;font-size:9.53px;color:#a7aaad;">–</span>
<span style="left:880.00px;top:534.00px;font-size:8.72px;color:#50575e;">Published</span>
<span style="left:880.00px;top:547.00px;font-size:9.06px;color:#50575e;">2026/02/26 at 9:39 am</span>
</div>
</body>
</html>
